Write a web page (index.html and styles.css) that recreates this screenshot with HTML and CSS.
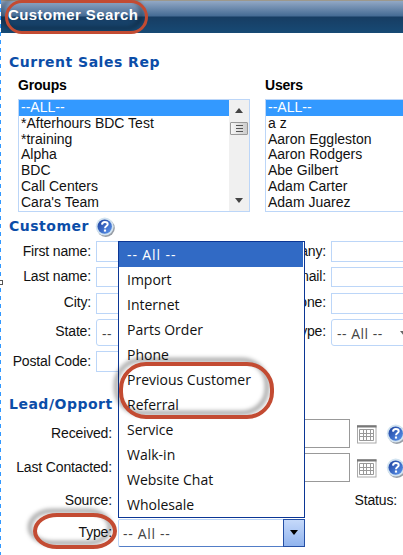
FILE: index.html
```html
<!DOCTYPE html>
<html lang="en">
<head>
<meta charset="utf-8">
<title>Customer Search</title>
<link rel="stylesheet" href="styles.css">
</head>
<body>
<svg width="0" height="0" class="defs">
  <defs>
    <linearGradient id="blue" x1="0" y1="0" x2="1" y2="1"><stop offset="0" stop-color="#1c3f9c"/><stop offset="1" stop-color="#5b95ee"/></linearGradient>
    <symbol id="help" viewBox="0 0 20 20">
      <circle cx="10.8" cy="11" r="9" fill="#7d858f" opacity=".8"/>
      <circle cx="9.7" cy="9.6" r="9" fill="#d3e4f1"/>
      <circle cx="9.7" cy="9.6" r="7.2" fill="url(#blue)"/>
      <path d="M7 7.6C7.1 5.6 8.3 4.9 9.8 4.9c1.7 0 2.9.9 2.9 2.3 0 1.8-2.7 1.8-2.7 4" fill="none" stroke="#fff" stroke-width="2"/>
      <rect x="8.9" y="12.5" width="2.2" height="2.1" fill="#fff"/>
    </symbol>
    <symbol id="calendar" viewBox="0 0 20 19">
      <rect x=".5" y=".5" width="18.5" height="17.5" fill="#fff" stroke="#aaa"/>
      <path d="M0 1.5h19.5" stroke="#777" stroke-width="2"/>
      <path d="M2.5 4.5h14v11h-14zM6.5 4.5v11M9.5 4.5v11M13.5 4.5v11M2.5 8.5h14M2.5 11.5h14" fill="none" stroke="#999"/>
    </symbol>
  </defs>
</svg>
<div class="page">
  <header><h1>Customer Search</h1></header>
  <main>
    <h2 class="rep">Current Sales Rep</h2>
    <section class="lists">
      <div>
        <h3>Groups</h3>
        <div class="list">
          <ul><li class="on">--ALL--</li><li>*Afterhours BDC Test</li><li>*training</li><li>Alpha</li><li>BDC</li><li>Call Centers</li><li>Cara's Team</li></ul>
          <div class="scroll"><i class="up"></i><i class="thumb"></i><i class="down"></i></div>
        </div>
      </div>
      <div>
        <h3>Users</h3>
        <div class="list">
          <ul><li class="on">--ALL--</li><li>a z</li><li>Aaron Eggleston</li><li>Aaron Rodgers</li><li>Abe Gilbert</li><li>Adam Carter</li><li>Adam Juarez</li></ul>
        </div>
      </div>
    </section>
    <h2 class="cust">Customer <svg class="help"><use href="#help"/></svg></h2>
    <section class="customer">
      <label>First name:</label><span class="field"></span><label>any:</label><span class="field"></span>
      <label>Last name:</label><span class="field"></span><label>mail:</label><span class="field"></span>
      <label>City:</label><span class="field"></span><label>one:</label><span class="field"></span>
      <label>State:</label><span class="field sel">--</span><label>ype:</label><span class="field sel">-- All -- <i class="caret"></i></span>
      <label>Postal Code:</label><span class="field"></span>
    </section>
    <h2 class="lead">Lead/Opport</h2>
    <section class="opportunity">
      <div class="row"><label>Received:</label><span class="date"></span><svg class="cal"><use href="#calendar"/></svg><svg class="help"><use href="#help"/></svg></div>
      <div class="row"><label>Last Contacted:</label><span class="date"></span><svg class="cal"><use href="#calendar"/></svg><svg class="help"><use href="#help"/></svg></div>
      <div class="row source"><label>Source:</label><label class="status">Status:</label></div>
      <div class="row type"><label>Type:</label><span class="combo"><b>-- All --</b><i class="arrow"></i></span></div>
    </section>
  </main>
  <ul class="menu"><li class="on">-- All --</li><li>Import</li><li>Internet</li><li>Parts Order</li><li>Phone</li><li>Previous Customer</li><li>Referral</li><li>Service</li><li>Walk-in</li><li>Website Chat</li><li>Wholesale</li></ul>
  <i class="ring r1"></i><i class="ring r2"></i><i class="ring r3"></i>
  <i class="edge"></i><i class="handle"></i>
</div>
</body>
</html>
```

FILE: styles.css
```css
* { box-sizing: border-box; }
body { margin: 0; background: #fff; color: #111; font: 14px "Liberation Sans", Arial, sans-serif; }
.defs { position: absolute; }
.page { position: relative; width: 403px; height: 555px; overflow: hidden; }
h1, h2, h3, ul { margin: 0; padding: 0; }
ul { list-style: none; }
header { height: 33px; border-top: 1px solid #9c988c; padding-left: 8px; background: linear-gradient(#92a8c5, #456b94 15px, #173d63 16px, #174a75 32px); }
h1 { font-size: 15px; line-height: 28px; color: #fff; letter-spacing: .4px; white-space: nowrap; }
h2 { font: bold 14px/20px "DejaVu Sans", Verdana, sans-serif; color: #0b4da8; padding-left: 9px; white-space: nowrap; }
.rep { margin-top: 19px; height: 25px; letter-spacing: .5px; }
.lists { display: grid; grid-template-columns: 232px 160px; gap: 15px; padding-left: 18px; }
h3 { font-size: 14px; line-height: 16px; height: 22px; color: #000; letter-spacing: -.2px; }
.list { display: flex; height: 113px; border: 1px solid #bcd6f8; }
.list ul { flex: 1; }
.list li { height: 15.8px; line-height: 15.8px; padding-left: 2px; white-space: nowrap; }
.list .on { background: #3399ff; color: #fff; }
.scroll { width: 20px; background: #f0f0f0; display: flex; flex-direction: column; align-items: center; padding: 8px 0; }
.up, .down { border: 4px solid transparent; height: 0; }
.up { border-top: 0; border-bottom: 5px solid #444; }
.down { border-bottom: 0; border-top: 5px solid #444; margin-top: auto; }
.thumb { width: 18px; height: 13px; margin-top: 9px; border: 1px solid #999; border-radius: 1px; background: repeating-linear-gradient(#555 0 1px, transparent 1px 3px) 5px 2px / 7px 7px no-repeat, linear-gradient(90deg, #f6f6f6, #ccc); }
.cust { display: flex; height: 29px; padding-top: 4px; gap: 6px; letter-spacing: .5px; }
.help { width: 20px; height: 20px; flex: none; }
.cust .help { margin-top: 1px; }
.customer { display: grid; grid-template-columns: 91px 142px 93px 100px; grid-template-rows: 21px 20px 21px 27px 21px; row-gap: 5.3px; height: 131px; }
.customer label { text-align: right; align-self: center; padding-bottom: 2px; letter-spacing: -.15px; }
.field { margin-left: 5px; border: 1px solid #bcd6f8; background: #fff; }
.sel { font: 14px/27px "Open Sans", sans-serif; padding-left: 5px; color: #444; border-radius: 3px; white-space: nowrap; letter-spacing: .5px; }
.caret { display: inline-block; border: 4px solid transparent; border-top: 5px solid #666; border-bottom: 0; margin-left: 13px; vertical-align: 3px; }
.lead { height: 47px; padding-top: 22px; letter-spacing: .5px; }
.row { display: flex; align-items: center; height: 29px; margin-bottom: 5px; }
.row label { width: 112px; text-align: right; flex: none; letter-spacing: -.15px; padding-bottom: 1px; }
.date { width: 232px; height: 29px; margin-left: 6px; border: 1px solid #999; flex: none; }
.cal { width: 20px; height: 19px; margin: 2px 0 0 7px; flex: none; }
.row .help { margin-left: 9px; }
.source { height: 27px; }
.row .status { margin-left: 242px; width: 43px; }
.combo { width: 187px; height: 28px; margin-left: 6px; display: flex; border: 1px solid #bcd6f8; border-bottom-color: #527dc7; border-radius: 2px; }
.combo b { flex: 1; padding-left: 4px; font: 14px/28px "Open Sans", sans-serif; color: #444; letter-spacing: .7px; }
.arrow { width: 22px; border: 1px solid #244fa5; margin: -1px; background: linear-gradient(#c5d9fa, #91b4ee); display: grid; place-items: center; }
.arrow::after { content: ""; border: 4.5px solid transparent; border-top: 5px solid #000; border-bottom: 0; }
.type { margin-top: -1px; }
.menu { position: absolute; left: 118px; top: 241px; width: 187px; height: 277px; background: #fff; border: 1px solid #0b3695; }
.menu li { height: 25px; padding-left: 8px; font: 14px/25px "Open Sans", "Noto Sans", sans-serif; color: #111; }
.menu .on { background: #316ac5; color: #fff; margin-right: 1px; letter-spacing: .9px; }
.ring { position: absolute; border: 4px solid #c34b32; filter: drop-shadow(-5px -4px 2px rgba(0,0,0,.38)); }
.r1 { left: 5px; top: 0; width: 143px; height: 34px; border-width: 3px; border-radius: 17px; }
.r2 { left: 119px; top: 362px; width: 155px; height: 57px; border-radius: 27px; }
.r3 { left: 33px; top: 513px; width: 84px; height: 36px; border-radius: 24px / 18px; }
.edge { position: absolute; left: 0; top: 0; width: 1px; height: 555px; background: repeating-linear-gradient(#3399ff 0 4px, #fff 4px 8px); }
.handle { position: absolute; left: -2px; top: 280px; width: 5px; height: 5px; border: 1px solid #555; background: #fff; }
```
